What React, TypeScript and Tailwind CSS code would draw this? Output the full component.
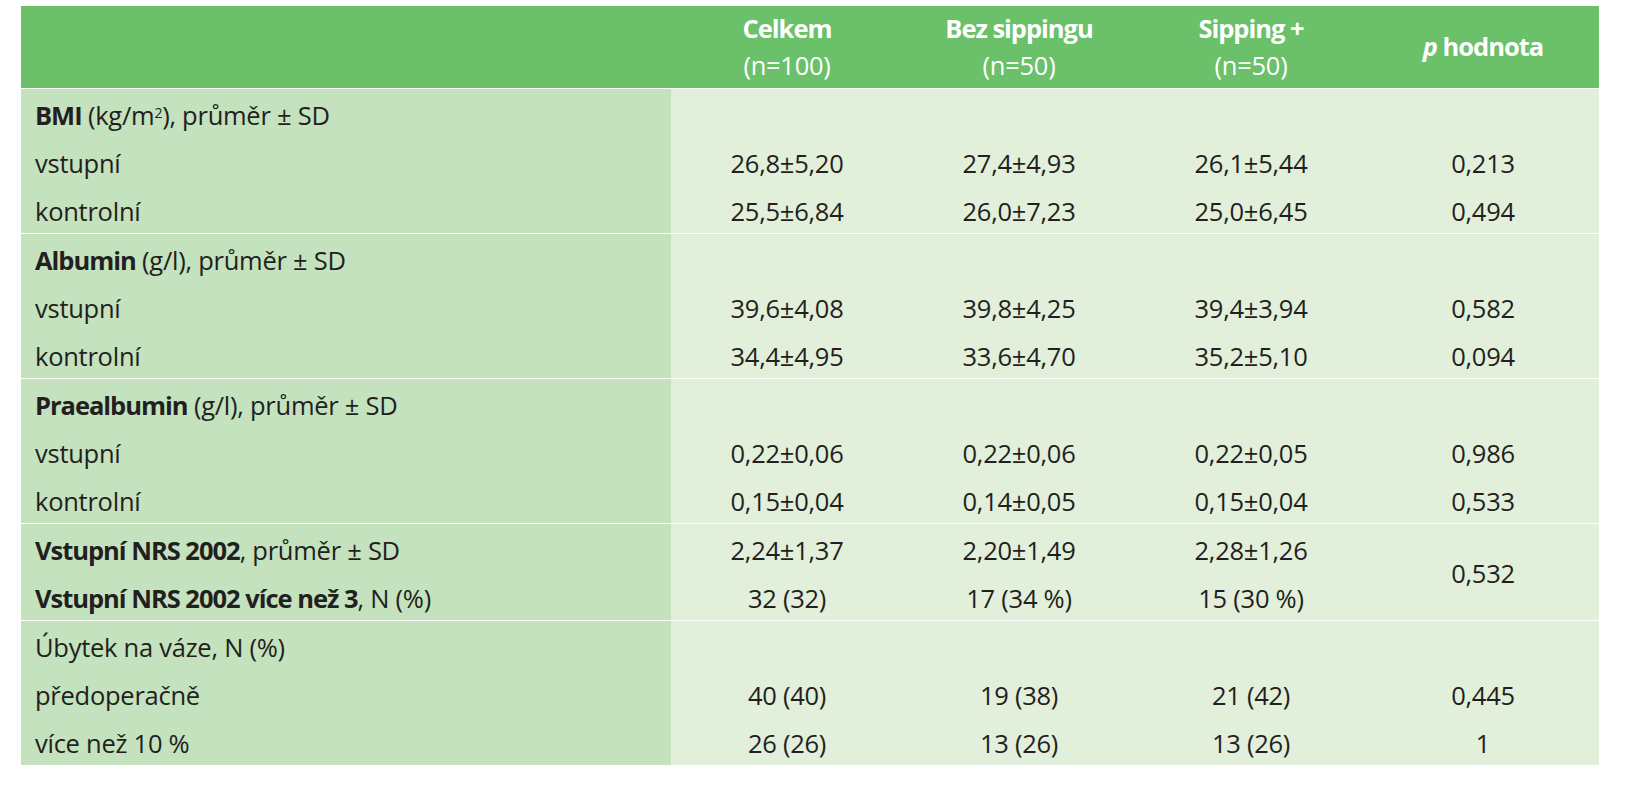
const font = { fontFamily: '"Open Sans", "Liberation Sans", sans-serif' }

type Row = { label: React.ReactNode; vals?: string[]; p?: string }

const B = ({ children }: { children: React.ReactNode }) => (
  <b className="font-bold tracking-[-0.04em]">{children}</b>
)

const groups: { rows: Row[]; spanP?: string }[] = [
  {
    rows: [
      {
        label: (
          <>
            <B>BMI</B> (kg/m<sup className="text-[14px]">2</sup>), průměr ± SD
          </>
        ),
      },
      { label: "vstupní", vals: ["26,8±5,20", "27,4±4,93", "26,1±5,44"], p: "0,213" },
      { label: "kontrolní", vals: ["25,5±6,84", "26,0±7,23", "25,0±6,45"], p: "0,494" },
    ],
  },
  {
    rows: [
      {
        label: (
          <>
            <B>Albumin</B> (g/l), průměr ± SD
          </>
        ),
      },
      { label: "vstupní", vals: ["39,6±4,08", "39,8±4,25", "39,4±3,94"], p: "0,582" },
      { label: "kontrolní", vals: ["34,4±4,95", "33,6±4,70", "35,2±5,10"], p: "0,094" },
    ],
  },
  {
    rows: [
      {
        label: (
          <>
            <B>Praealbumin</B> (g/l), průměr ± SD
          </>
        ),
      },
      { label: "vstupní", vals: ["0,22±0,06", "0,22±0,06", "0,22±0,05"], p: "0,986" },
      { label: "kontrolní", vals: ["0,15±0,04", "0,14±0,05", "0,15±0,04"], p: "0,533" },
    ],
  },
  {
    spanP: "0,532",
    rows: [
      {
        label: (
          <>
            <B>Vstupní NRS 2002</B>, průměr ± SD
          </>
        ),
        vals: ["2,24±1,37", "2,20±1,49", "2,28±1,26"],
      },
      {
        label: (
          <>
            <B>Vstupní NRS 2002 více než 3</B>, N (%)
          </>
        ),
        vals: ["32 (32)", "17 (34 %)", "15 (30 %)"],
      },
    ],
  },
  {
    rows: [
      { label: "Úbytek na váze, N (%)" },
      { label: "předoperačně", vals: ["40 (40)", "19 (38)", "21 (42)"], p: "0,445" },
      { label: "více než 10 %", vals: ["26 (26)", "13 (26)", "13 (26)"], p: "1" },
    ],
  },
]

function Group({ rows, spanP }: { rows: Row[]; spanP?: string }) {
  return (
    <div className="grid grid-cols-[650px_repeat(4,232px)] auto-rows-[48px] border-t border-white">
      {rows.map((r, i) => (
        <div key={i} className="contents">
          <div className="bg-[#c4e2bd] flex items-center pl-[14px] pt-[6px]">
            <span>{r.label}</span>
          </div>
          {[0, 1, 2].map((c) => (
            <div key={c} className="bg-[#e1efdb] flex items-center justify-center pt-[6px]">
              {r.vals ? r.vals[c] : ""}
            </div>
          ))}
          {spanP ? (
            i === 0 && (
              <div className="row-span-2 bg-[#e1efdb] flex items-center justify-center pt-[4px]">{spanP}</div>
            )
          ) : (
            <div className="bg-[#e1efdb] flex items-center justify-center pt-[6px]">{r.p ?? ""}</div>
          )}
        </div>
      ))}
    </div>
  )
}

export default function App() {
  return (
    <div className="w-[1625px] h-[800px] bg-white pt-[6px] pl-[21px]" style={font}>
      <div className="w-[1578px] text-[25.5px] text-[#231f20] leading-none tracking-[-0.01em]">
        {/* Header */}
        <div className="grid grid-cols-[650px_repeat(4,232px)] h-[82px] bg-[#6bc06a] text-white">
          <div />
          <div className="flex flex-col items-center justify-center gap-[12px]">
            <B>Celkem</B>
            <span>(n=100)</span>
          </div>
          <div className="flex flex-col items-center justify-center gap-[12px]">
            <B>Bez sippingu</B>
            <span>(n=50)</span>
          </div>
          <div className="flex flex-col items-center justify-center gap-[12px]">
            <B>Sipping +</B>
            <span>(n=50)</span>
          </div>
          <div className="flex items-center justify-center">
            <B>
              <i>p</i> hodnota
            </B>
          </div>
        </div>
        {groups.map((g, i) => (
          <Group key={i} rows={g.rows} spanP={g.spanP} />
        ))}
      </div>
    </div>
  )
}
